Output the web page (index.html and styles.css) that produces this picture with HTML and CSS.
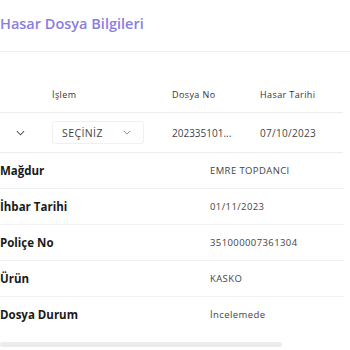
FILE: index.html
```html
<!DOCTYPE html>
<html lang="tr">
<head>
    <meta charset="UTF-8">
    <meta name="viewport" content="width=device-width, initial-scale=1.0">
    <title>Hasar Dosya Bilgileri</title>
    <link rel="stylesheet" href="styles.css">
</head>
<body>
    <h1 class="title">Hasar Dosya Bilgileri</h1>

    <div class="file-table">
        <div class="table-row table-head">
            <span class="cell cell-toggle"></span>
            <span class="cell cell-action">İşlem</span>
            <span class="cell cell-no">Dosya No</span>
            <span class="cell cell-date">Hasar Tarihi</span>
        </div>
        <div class="table-row table-body">
            <span class="cell cell-toggle">
                <svg class="chevron" viewBox="0 0 10 6" width="9" height="6"><path d="M1 1l4 4 4-4" fill="none" stroke="#555" stroke-width="1.2"/></svg>
            </span>
            <span class="cell cell-action">
                <span class="select">
                    <span class="select-text">SEÇİNİZ</span>
                    <svg class="chevron" viewBox="0 0 10 6" width="8" height="5"><path d="M1 1l4 4 4-4" fill="none" stroke="#777" stroke-width="1"/></svg>
                </span>
            </span>
            <span class="cell cell-no">202335101...</span>
            <span class="cell cell-date">07/10/2023</span>
        </div>
    </div>

    <div class="details">
        <div class="detail-row">
            <span class="detail-label">Mağdur</span>
            <span class="detail-value">EMRE TOPDANCI</span>
        </div>
        <div class="detail-row">
            <span class="detail-label">İhbar Tarihi</span>
            <span class="detail-value">01/11/2023</span>
        </div>
        <div class="detail-row">
            <span class="detail-label">Poliçe No</span>
            <span class="detail-value">351000007361304</span>
        </div>
        <div class="detail-row">
            <span class="detail-label">Ürün</span>
            <span class="detail-value">KASKO</span>
        </div>
        <div class="detail-row last">
            <span class="detail-label">Dosya Durum</span>
            <span class="detail-value">İncelemede</span>
        </div>
    </div>

    <div class="scrollbar"></div>
</body>
</html>
```

FILE: styles.css
```css
body {
    margin: 0;
    background-color: #ffffff;
    font-family: "Open Sans", "Noto Sans", sans-serif;
    color: #333;
}
.title {
    margin: 0;
    height: 52px;
    padding-top: 14px;
    box-sizing: border-box;
    font-size: 14.5px;
    font-weight: 600;
    color: #8a7ee3;
    border-bottom: 1px solid #eeeeee;
}
.file-table {
    width: 343px;
}
.table-row {
    display: grid;
    grid-template-columns: 52px 120px 88px 1fr;
    align-items: center;
    border-bottom: 1px solid #ececec;
}
.table-head {
    height: 61px;
    padding-top: 25px;
    box-sizing: border-box;
    font-size: 9px;
    letter-spacing: 0.4px;
    color: #333;
}
.table-body {
    height: 39px;
    font-size: 10px;
    letter-spacing: 0.3px;
    color: #444;
}
.table-body .cell-no {
    letter-spacing: 0;
}
.cell-toggle {
    display: flex;
    justify-content: center;
    padding-right: 12px;
}
.select {
    display: flex;
    align-items: center;
    justify-content: space-between;
    width: 92px;
    height: 23px;
    box-sizing: border-box;
    padding: 0 12px 0 9px;
    border: 1px solid #f0f0f0;
    border-radius: 3px;
    font-size: 10.5px;
    letter-spacing: 0.4px;
    color: #444;
}
.details {
    width: 345px;
}
.detail-row {
    display: grid;
    grid-template-columns: 210px 1fr;
    align-items: center;
    height: 35px;
    border-bottom: 1px solid #f3f3f3;
}
.detail-row.last {
    border-bottom: none;
}
.detail-label {
    font-size: 11.5px;
    font-weight: 700;
    color: #1a1a1a;
}
.detail-value {
    font-size: 9.5px;
    letter-spacing: 0.4px;
    color: #444;
}
.scrollbar {
    margin-top: 10px;
    width: 282px;
    height: 5px;
    background-color: #ececec;
    border-radius: 3px;
}
```
